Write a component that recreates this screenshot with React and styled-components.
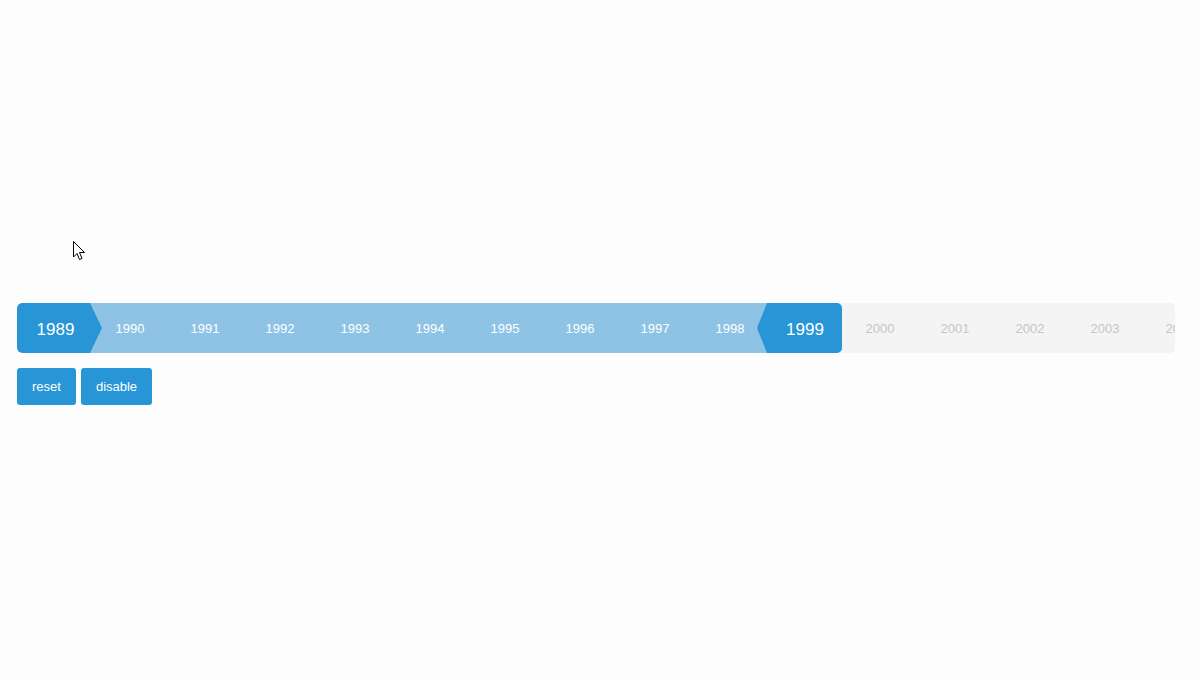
import React, { useState } from 'react';
import styled, { createGlobalStyle, css } from 'styled-components';

const GlobalStyle = createGlobalStyle`
  html, body {
    margin: 0;
    background: #fdfdfd;
    font-family: "Liberation Sans", Arial, sans-serif;
  }
`;

const Page = styled.div`
  padding: 303px 25px 0 17px;
`;

const Track = styled.div`
  display: flex;
  width: 1158px;
  height: 50px;
  overflow: hidden;
  background: #f4f4f4;
  border-radius: 5px;
`;

const Year = styled.div`
  position: relative;
  flex: 0 0 75px;
  box-sizing: border-box;
  display: flex;
  align-items: center;
  justify-content: center;
  padding-left: 1px;
  font-size: 13px;
  color: #c6c6c6;
  user-select: none;

  ${({ $state }) => $state === 'range' && css`
    background: #8ec3e5;
    color: #fff;
  `}

  ${({ $state }) => $state === 'from' && css`
    z-index: 2;
    padding: 4px 0 0 2px;
    font-size: 17px;
    color: #fff;
    background: linear-gradient(to right, #2895d6 73px, #8ec3e5 73px);
    border-radius: 5px 0 0 5px;

    &::after {
      content: '';
      position: absolute;
      left: 73px;
      top: 0;
      border-top: 25px solid transparent;
      border-bottom: 25px solid transparent;
      border-left: 12px solid #2895d6;
    }
  `}

  ${({ $state }) => $state === 'to' && css`
    z-index: 2;
    padding: 4px 0 0 1px;
    font-size: 17px;
    color: #fff;
    background: #2895d6;
    border-radius: 0 5px 5px 0;

    &::before {
      content: '';
      position: absolute;
      right: 100%;
      top: 0;
      border-top: 25px solid transparent;
      border-bottom: 25px solid transparent;
      border-right: 10px solid #2895d6;
    }
  `}
`;

const Controls = styled.div`
  display: flex;
  gap: 5px;
  margin-top: 15px;
`;

const Button = styled.button`
  height: 37px;
  padding: 0 15px;
  border: none;
  border-radius: 3px;
  background: #2895d6;
  color: #fff;
  font-family: "Liberation Sans", Arial, sans-serif;
  font-size: 13px;
  cursor: pointer;
`;

const Pointer = styled.svg`
  position: fixed;
  left: 73px;
  top: 241px;
  pointer-events: none;
`;

const years = Array.from({ length: 16 }, (_, i) => 1989 + i);

const App = () => {
    const [from, setFrom] = useState(1989);
    const [to, setTo] = useState(1999);
    const [disabled, setDisabled] = useState(false);

    const stateOf = (y) => {
        if (y === from) return 'from';
        if (y === to) return 'to';
        if (y > from && y < to) return 'range';
        return 'out';
    };

    return (
        <Page>
            <GlobalStyle />
            <Track style={{ opacity: disabled ? 0.5 : 1 }}>
                {years.map((y) => (
                    <Year key={y} $state={stateOf(y)}>{y}</Year>
                ))}
            </Track>
            <Controls>
                <Button onClick={() => { setFrom(1989); setTo(1999); }}>reset</Button>
                <Button onClick={() => setDisabled(!disabled)}>disable</Button>
            </Controls>
            <Pointer width="13" height="20" viewBox="0 0 13 20">
                <path d="M0.5 0.5 L0.5 16 L4 12.5 L6.5 18.5 L9 17.5 L6.5 11.5 L11.5 11.5 Z" fill="#fff" stroke="#000" strokeWidth="1" strokeLinejoin="miter" />
            </Pointer>
        </Page>
    );
};

export default App;
